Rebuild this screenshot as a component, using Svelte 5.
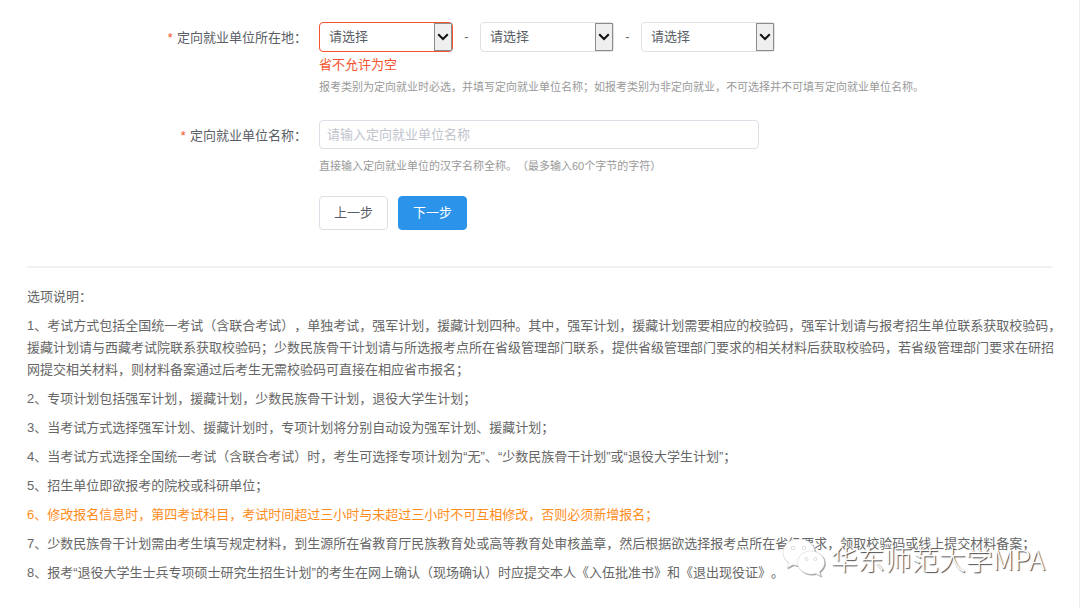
<script>
  let regions = $state([
    { id: 'province', label: '省', value: '', error: true },
    { id: 'city', label: '市', value: '', error: false },
    { id: 'county', label: '县', value: '', error: false },
  ]);
  let company = $state('');

  const notes = [
    { text: '1、考试方式包括全国统一考试（含联合考试），单独考试，强军计划，援藏计划四种。其中，强军计划，援藏计划需要相应的校验码，强军计划请与报考招生单位联系获取校验码，援藏计划请与西藏考试院联系获取校验码；少数民族骨干计划请与所选报考点所在省级管理部门联系，提供省级管理部门要求的相关材料后获取校验码，若省级管理部门要求在研招网提交相关材料，则材料备案通过后考生无需校验码可直接在相应省市报名；' },
    { text: '2、专项计划包括强军计划，援藏计划，少数民族骨干计划，退役大学生计划；' },
    { text: '3、当考试方式选择强军计划、援藏计划时，专项计划将分别自动设为强军计划、援藏计划；' },
    { text: '4、当考试方式选择全国统一考试（含联合考试）时，考生可选择专项计划为“无”、“少数民族骨干计划”或“退役大学生计划”；' },
    { text: '5、招生单位即欲报考的院校或科研单位；' },
    { text: '6、修改报名信息时，第四考试科目，考试时间超过三小时与未超过三小时不可互相修改，否则必须新增报名；', warn: true },
    { text: '7、少数民族骨干计划需由考生填写规定材料，到生源所在省教育厅民族教育处或高等教育处审核盖章，然后根据欲选择报考点所在省级要求，领取校验码或线上提交材料备案；' },
    { text: '8、报考“退役大学生士兵专项硕士研究生招生计划”的考生在网上确认（现场确认）时应提交本人《入伍批准书》和《退出现役证》。' },
  ];
</script>

<div class="page">
  <form class="form" onsubmit={(e) => e.preventDefault()}>
    <div class="row">
      <label class="label" for="province"><span class="star">*</span>定向就业单位所在地：</label>
      <div class="field">
        <div class="selects">
          {#each regions as region, i (region.id)}
            {#if i > 0}<span class="dash">-</span>{/if}
            <div class="select-box" class:error={region.error}>
              <select id={region.id} aria-label={region.label} bind:value={region.value}>
                <option value="">请选择</option>
              </select>
              <span class="arrow">
                <svg viewBox="0 0 12 8" width="12" height="8">
                  <path d="M1.200 1.300 6 6 10.800 1.300" fill="none" stroke="#111" stroke-width="2" />
                </svg>
              </span>
            </div>
          {/each}
        </div>
        <p class="error-text">省不允许为空</p>
        <p class="help">报考类别为定向就业时必选，并填写定向就业单位名称；如报考类别为非定向就业，不可选择并不可填写定向就业单位名称。</p>
      </div>
    </div>

    <div class="row">
      <label class="label" for="company"><span class="star">*</span>定向就业单位名称：</label>
      <div class="field">
        <input id="company" class="input" type="text" placeholder="请输入定向就业单位名称" bind:value={company} />
        <p class="help below-input">直接输入定向就业单位的汉字名称全称。（最多输入60个字节的字符）</p>
      </div>
    </div>

    <div class="actions">
      <button type="button" class="btn">上一步</button>
      <button type="submit" class="btn primary">下一步</button>
    </div>
  </form>

  <section class="notes">
    <p>选项说明：</p>
    {#each notes as note}
      <p class:warn={note.warn}>{note.text}</p>
    {/each}
  </section>

  <div class="watermark">
    <svg viewBox="0 0 46 40" width="46" height="40">
      <g class="bubble">
        <path d="M18 0C9 0 2 6 2 13.500c0 4.200 2.200 7.800 5.600 10.300L6 29l6-3.200c1.900.6 3.900.9 6 .9 9 0 16-6 16-13.200S27 0 18 0z" />
        <circle class="eye" cx="12" cy="9" r="1.800" />
        <circle class="eye" cx="23" cy="9" r="1.800" />
      </g>
      <g class="bubble">
        <path d="M30 12c-7.500 0-13.500 5.200-13.500 11.600S22.500 35.200 30 35.200c1.700 0 3.300-.3 4.800-.7l5 2.700-1.300-4.500c3.100-2.200 5-5.400 5-9.100 0-6.400-6-11.600-13.500-11.600z" />
        <circle class="eye" cx="25.500" cy="20" r="1.500" />
        <circle class="eye" cx="34.500" cy="20" r="1.500" />
      </g>
    </svg>
    <span>华东师范大学MPA</span>
  </div>
</div>

<style>
  :global(body) {
    background: #fff;
  }

  .page {
    position: relative;
    box-sizing: border-box;
    min-height: 100vh;
    padding: 22px 27px 20px;
    border-right: 1px solid #eee;
    overflow: hidden;
    font-family: "Liberation Sans", "Noto Sans CJK SC", sans-serif;
    font-size: 13px;
    line-height: 22px;
    color: #666;
    text-spacing-trim: space-all;
  }

  p {
    margin: 0;
  }

  .form {
    padding-bottom: 36px;
    border-bottom: 2px solid #f0f0f0;
  }

  .row {
    display: grid;
    grid-template-columns: 280px 1fr;
    column-gap: 12px;
    margin-bottom: 22px;
  }

  .label {
    padding-top: 5px;
    text-align: right;
    color: #5a5e66;
  }

  .star {
    margin-right: 3px;
    font-family: "Liberation Mono", monospace;
    color: #f5532d;
  }

  .selects {
    display: flex;
    align-items: center;
  }

  .select-box {
    position: relative;
    width: 134px;
  }

  select {
    appearance: none;
    display: block;
    box-sizing: border-box;
    width: 100%;
    height: 30px;
    padding: 0 24px 0 9px;
    border: 1px solid #dfe1e6;
    border-radius: 4px;
    background: #fff;
    font: inherit;
    color: #5a5e66;
  }

  .error select {
    border-color: #f5532d;
  }

  .arrow {
    position: absolute;
    top: 1px;
    right: 1px;
    bottom: 1px;
    display: flex;
    align-items: center;
    justify-content: center;
    width: 16px;
    border: 1px solid #8c8c8c;
    background: #efefef;
    pointer-events: none;
  }

  .dash {
    width: 27px;
    text-align: center;
  }

  .error-text {
    margin-top: 2px;
    color: #f5532d;
  }

  .help {
    font-size: 11px;
    color: #999;
  }

  .below-input {
    margin-top: 6px;
  }

  .input {
    display: block;
    box-sizing: border-box;
    width: 440px;
    max-width: 100%;
    height: 29px;
    padding: 0 7px;
    border: 1px solid #dcdfe6;
    border-radius: 4px;
    font: inherit;
    color: #5a5e66;
  }

  .input::placeholder {
    color: #c0c4cc;
  }

  .actions {
    display: flex;
    gap: 10px;
    margin-top: -3px;
    padding-left: 292px;
  }

  .btn {
    box-sizing: border-box;
    height: 34px;
    padding: 0 14px;
    border: 1px solid #dcdfe6;
    border-radius: 4px;
    background: #fff;
    font: inherit;
    color: #5a5e66;
    cursor: pointer;
  }

  .primary {
    border-color: #2b93ea;
    background: #2b93ea;
    color: #fff;
  }

  .notes {
    display: flex;
    flex-direction: column;
    gap: 7px;
    margin-right: -11px;
    padding-top: 18px;
  }

  .warn {
    color: #ff8c1a;
  }

  .watermark {
    position: absolute;
    right: 34px;
    bottom: 29px;
    display: flex;
    align-items: center;
    gap: 4px;
    font-family: "Noto Sans CJK SC", sans-serif;
    font-size: 27px;
    font-weight: 300;
    line-height: 40px;
    color: #fff;
    text-shadow: 1px 1px 1px #444;
    pointer-events: none;
  }

  .bubble {
    fill: #fff;
    stroke: #ccc;
    stroke-width: 0.5;
    filter: drop-shadow(1px 1px 0 #999);
  }

  .eye {
    fill: #fff;
    stroke: #bbb;
    stroke-width: 0.5;
  }
</style>
